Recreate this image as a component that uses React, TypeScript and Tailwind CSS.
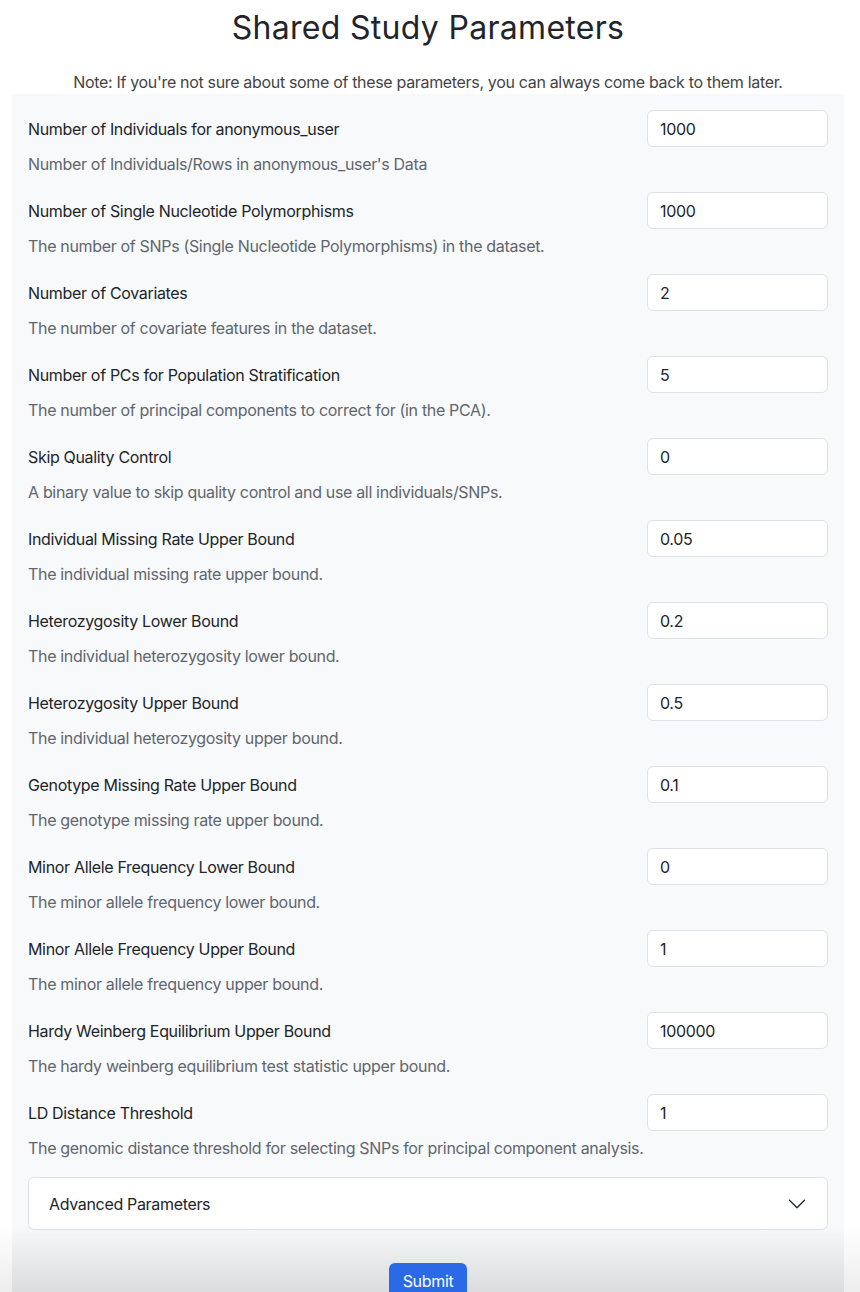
import React from "react";

interface Param {
  label: string;
  value: string;
  help: string;
}

const params: Param[] = [
  { label: "Number of Individuals for anonymous_user", value: "1000", help: "Number of Individuals/Rows in anonymous_user's Data" },
  { label: "Number of Single Nucleotide Polymorphisms", value: "1000", help: "The number of SNPs (Single Nucleotide Polymorphisms) in the dataset." },
  { label: "Number of Covariates", value: "2", help: "The number of covariate features in the dataset." },
  { label: "Number of PCs for Population Stratification", value: "5", help: "The number of principal components to correct for (in the PCA)." },
  { label: "Skip Quality Control", value: "0", help: "A binary value to skip quality control and use all individuals/SNPs." },
  { label: "Individual Missing Rate Upper Bound", value: "0.05", help: "The individual missing rate upper bound." },
  { label: "Heterozygosity Lower Bound", value: "0.2", help: "The individual heterozygosity lower bound." },
  { label: "Heterozygosity Upper Bound", value: "0.5", help: "The individual heterozygosity upper bound." },
  { label: "Genotype Missing Rate Upper Bound", value: "0.1", help: "The genotype missing rate upper bound." },
  { label: "Minor Allele Frequency Lower Bound", value: "0", help: "The minor allele frequency lower bound." },
  { label: "Minor Allele Frequency Upper Bound", value: "1", help: "The minor allele frequency upper bound." },
  { label: "Hardy Weinberg Equilibrium Upper Bound", value: "100000", help: "The hardy weinberg equilibrium test statistic upper bound." },
  { label: "LD Distance Threshold", value: "1", help: "The genomic distance threshold for selecting SNPs for principal component analysis." },
];

function ParamRow({ p }: { p: Param }) {
  return (
    <div className="mb-[17px] flex items-start justify-between">
      <div className="whitespace-nowrap">
        <div className="leading-[37px] text-[#212529]">{p.label}</div>
        <div className="mt-1 leading-6 text-[#5f666d]">{p.help}</div>
      </div>
      <input
        defaultValue={p.value}
        className="-mt-px h-[37px] w-[181px] shrink-0 rounded-[6px] border border-[#dee2e6] bg-white px-3 text-[#212529] outline-none"
      />
    </div>
  );
}

export default function App() {
  return (
    <div
      className="relative h-[1292px] overflow-hidden bg-white text-base tracking-[-0.33px]"
      style={{ fontFamily: "Inter, 'Noto Sans', sans-serif" }}
    >
      <div className="ml-[12px] w-[832px]">
        <h1 className="pt-[9px] text-center text-[32px] leading-[38px] font-normal tracking-[0.3px] text-[#212529]">
          Shared Study Parameters
        </h1>
        <p className="mt-[23px] text-center leading-6 text-[#444]">
          Note: If you're not sure about some of these parameters, you can always come back to them later.
        </p>
        <div className="bg-[#f8f9fa] px-4 pt-[17px] pb-10">
          {params.map((p) => (
            <ParamRow key={p.label} p={p} />
          ))}
          <div className="flex h-[53px] items-center justify-between rounded-[6px] border border-[#dee2e6] bg-white px-5">
            <span className="text-[#212529]">Advanced Parameters</span>
            <svg width="20" height="20" viewBox="0 0 16 16" fill="#212529">
              <path d="M1.646 4.646a.5.5 0 0 1 .708 0L8 10.293l5.646-5.647a.5.5 0 0 1 .708.708l-6 6a.5.5 0 0 1-.708 0l-6-6a.5.5 0 0 1 0-.708z" />
            </svg>
          </div>
          <div className="mt-[33px] flex justify-center">
            <button className="relative z-10 rounded-[6px] bg-[#2a6ae6] px-[14px] py-1.5 leading-6 text-white">
              Submit
            </button>
          </div>
        </div>
      </div>
      <div className="pointer-events-none absolute inset-x-0 bottom-0 h-[68px] bg-gradient-to-b from-transparent to-black/[0.07]" />
      <div className="pointer-events-none absolute bottom-0 left-[12px] h-[68px] w-[832px] bg-gradient-to-b from-transparent to-black/[0.05]" />
    </div>
  );
}
